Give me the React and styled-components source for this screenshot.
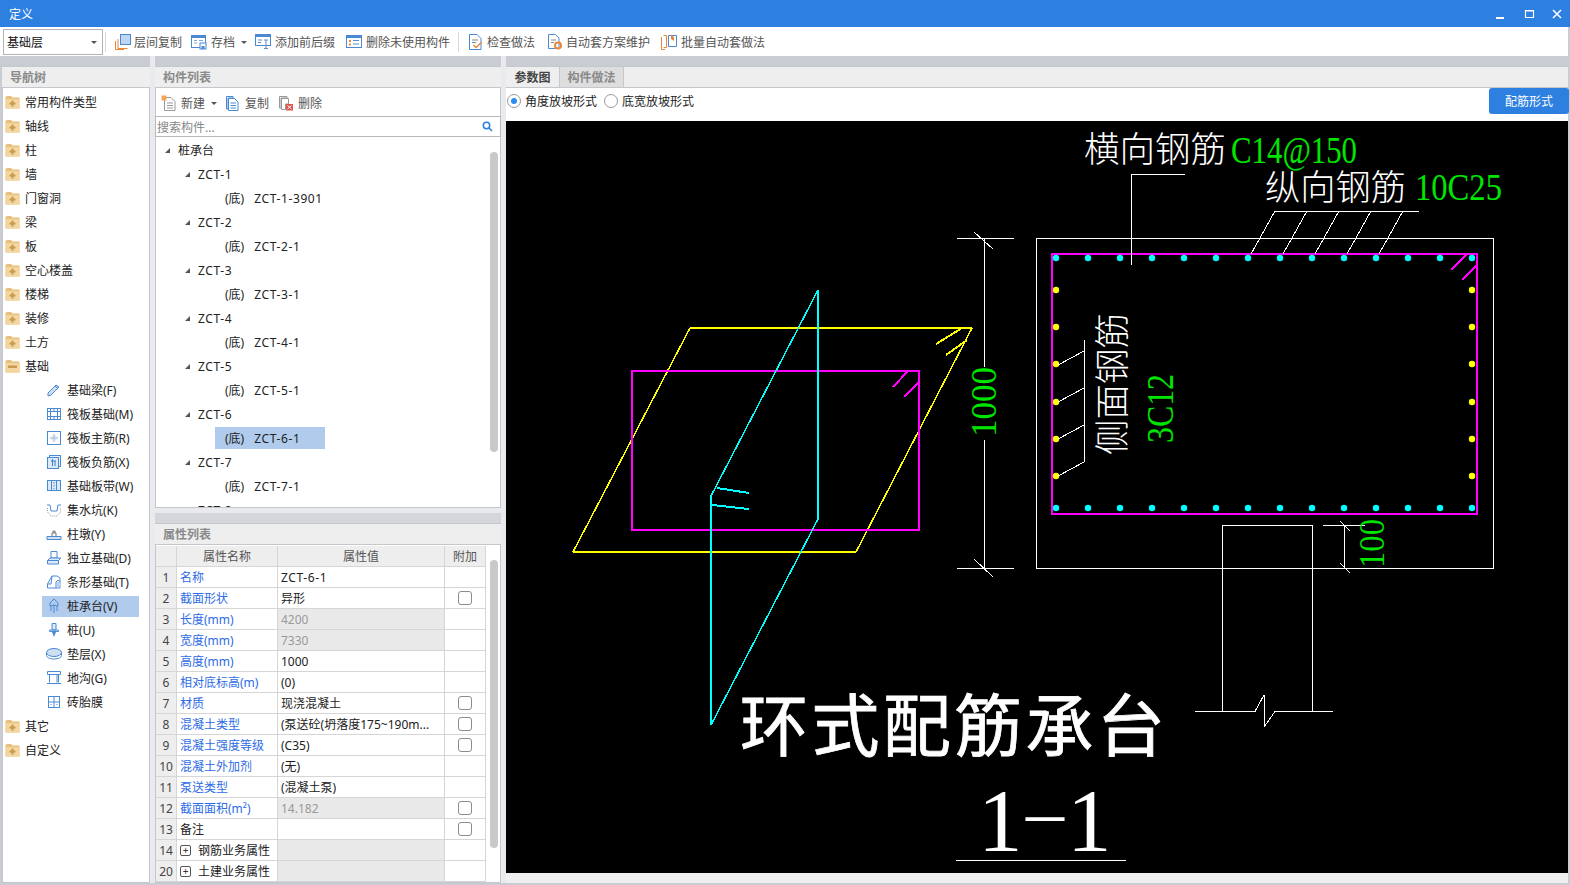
import React from "react";
import styled, { createGlobalStyle } from "styled-components";

const UI_FONT = `"Noto Sans", "Noto Sans CJK SC", sans-serif`;

const GlobalStyle = createGlobalStyle`
  html, body { margin: 0; padding: 0; overflow: hidden; background: #fff; }
  body { font-family: ${UI_FONT}; font-size: 12px; color: #222; }
  * { box-sizing: border-box; }
`;

const Page = styled.div`
  width: 1570px;
  height: 885px;
  display: flex;
  flex-direction: column;
  background: #c9ccd3;
  overflow: hidden;
`;

// 标题栏
const TitleBar = styled.div`
  height: 27px;
  flex: none;
  background: #2d7fe0;
  color: #fff;
  display: flex;
  align-items: center;
  justify-content: space-between;
  padding: 0 6px 0 9px;
`;

const WindowButtons = styled.div`
  display: flex;
  align-items: center;
  gap: 14px;
`;

// 工具栏
const Toolbar = styled.div`
  height: 29px;
  flex: none;
  background: #fff;
  margin-right: 2px;
  display: flex;
  align-items: center;
  padding: 1px 0 0 3px;
`;

const FloorSelect = styled.div`
  width: 100px;
  height: 26px;
  border: 1px solid #b4b4b4;
  color: #111;
  display: flex;
  align-items: center;
  justify-content: space-between;
  padding: 0 5px 0 3px;
`;

const Caret = styled.span`
  width: 0;
  height: 0;
  border-left: 3px solid transparent;
  border-right: 3px solid transparent;
  border-top: 3px solid #555;
  margin-left: ${(p) => p.$left || 0}px;
`;

const Sep = styled.span`
  width: 1px;
  height: 20px;
  background: #d8d8d8;
  margin: 0 ${(p) => p.$after ?? 8}px 0 ${(p) => p.$before ?? 2}px;
`;

const ToolButton = styled.div`
  display: flex;
  align-items: center;
  gap: ${(p) => p.$gap ?? 4}px;
  color: #555;
  white-space: nowrap;
  margin-right: ${(p) => p.$right ?? 11}px;
`;

const Workspace = styled.div`
  flex: 1;
  display: flex;
  padding: 0 0 2px 2px;
  min-height: 0;
`;

const Column = styled.div`
  width: ${(p) => p.$w}px;
  flex: none;
  padding-top: 10px;
  display: flex;
  flex-direction: column;
  min-height: 0;
`;

const Splitter = styled.div`
  width: 5px;
  flex: none;
  background: #e9eaed;
`;

const PanelHead = styled.div`
  height: 22px;
  flex: none;
  background: #eeeeee;
  border-top: 1px solid #c4c7cc;
  border-bottom: 1px solid #c4c7cc;
  color: #8a8a8a;
  font-weight: 700;
  display: flex;
  align-items: center;
  padding-left: 8px;
`;

const NavBody = styled.div`
  flex: 1;
  background: #fff;
  border: 1px solid #c4c7cc;
  border-top: none;
  padding-top: 2px;
  overflow: hidden;
`;

const NavRow = styled.div`
  height: 24px;
  display: flex;
  align-items: center;
  color: #222;
  padding-left: ${(p) => (p.$child ? 43 : 2)}px;
  gap: 5px;
`;

const NavLabelBox = styled.div`
  display: flex;
  align-items: center;
  gap: 5px;
  height: 21px;
  width: 97px;
  margin-left: -4px;
  padding-left: 4px;
  background: ${(p) => (p.$on ? "#b0cbec" : "transparent")};
  flex: none;
`;

const ListToolbar = styled.div`
  height: 28px;
  flex: none;
  background: #fff;
  display: flex;
  align-items: center;
  padding: 2px 0 0 5px;
  border-left: 1px solid #c4c7cc;
  border-right: 1px solid #c4c7cc;
`;

const SearchBox = styled.div`
  height: 21px;
  flex: none;
  background: #fff;
  border: 1px solid #b8b8b8;
  color: #888;
  display: flex;
  align-items: center;
  justify-content: space-between;
  padding: 0 7px 0 1px;
`;

const ListBody = styled.div`
  height: 371px;
  flex: none;
  position: relative;
  background: #fff;
  border: 1px solid #c4c7cc;
  border-top: none;
  overflow: hidden;
  padding-top: 1px;
`;

const ListRow = styled.div`
  height: 24px;
  display: flex;
  align-items: center;
  padding-left: ${(p) => p.$indent}px;
  gap: 8px;
  color: #222;
`;

const LeafLabel = styled.div`
  height: 22px;
  width: 110px;
  margin-left: 59px;
  padding-left: 10px;
  display: flex;
  align-items: center;
  gap: 10px;
  background: ${(p) => (p.$on ? "#b0cbec" : "transparent")};
`;

const CodeText = styled.span`
  letter-spacing: 0.6px;
`;

const Triangle = styled.span`
  width: 0;
  height: 0;
  border-left: 5px solid transparent;
  border-bottom: 5px solid #555;
`;

const ScrollThumb = styled.div`
  position: absolute;
  top: ${(p) => p.$top}px;
  right: ${(p) => p.$right}px;
  width: 8px;
  height: ${(p) => p.$h}px;
  border-radius: 4px;
  background: #c9c9c9;
`;

const PropGap = styled.div`
  height: 15px;
  flex: none;
  background: #d4d6db;
  border-top: 5px solid #e9eaed;
`;

const PropBody = styled.div`
  flex: 1;
  position: relative;
  background: #fff;
  border: 1px solid #c4c7cc;
  border-top: none;
  padding-top: 1px;
  overflow: hidden;
`;

const PropTable = styled.div`
  width: 330px;
  display: grid;
  grid-template-columns: 21px 101px 167px 41px;
  grid-auto-rows: 21px;
`;

const Cell = styled.div`
  display: flex;
  align-items: center;
  border-right: 1px solid #d6d6d6;
  border-bottom: 1px solid #d6d6d6;
  white-space: nowrap;
  overflow: hidden;
  padding-left: ${(p) => p.$pad ?? 3}px;
  justify-content: ${(p) => p.$align || "flex-start"};
  background: ${(p) => p.$bg || "#fff"};
  color: ${(p) => p.$color || "#222"};
  gap: 5px;
`;

const CheckBox = styled.span`
  width: 14px;
  height: 14px;
  border: 1px solid #8c8c8c;
  border-radius: 3px;
  background: #fff;
`;

const PlusBox = styled.span`
  width: 11px;
  height: 11px;
  border: 1px solid #555;
  border-radius: 2px;
  margin-right: 2px;
  flex: none;
  display: flex;
  align-items: center;
  justify-content: center;
  font-size: 10px;
  line-height: 1;
  color: #333;
`;

const TabBar = styled.div`
  height: 22px;
  flex: none;
  display: flex;
  background: #eeeeee;
  border-top: 1px solid #c4c7cc;
  border-bottom: 1px solid #c4c7cc;
`;

const Tab = styled.div`
  width: ${(p) => p.$w}px;
  display: flex;
  align-items: center;
  justify-content: center;
  font-weight: 700;
  background: ${(p) => (p.$on ? "#eeeeee" : "#dedede")};
  color: ${(p) => (p.$on ? "#444" : "#8a8a8a")};
  border-right: 1px solid #c8c8c8;
`;

const ParamBar = styled.div`
  height: 33px;
  flex: none;
  background: #fff;
  display: flex;
  align-items: flex-start;
  padding-top: 4px;
  gap: 7px;
`;

const RadioLabel = styled.label`
  display: flex;
  align-items: center;
  gap: 4px;
  color: #222;
  height: 17px;
  padding-left: ${(p) => p.$pad || 0}px;
`;

const RadioDot = styled.span`
  width: 14px;
  height: 14px;
  border-radius: 50%;
  border: 1px solid #999;
  background: #fff;
  display: flex;
  align-items: center;
  justify-content: center;
  &::after {
    content: "";
    width: 6px;
    height: 6px;
    border-radius: 50%;
    background: ${(p) => (p.$on ? "#2d8cf0" : "transparent")};
  }
`;

const BlueButton = styled.div`
  margin: -4px -1px 0 auto;
  width: 80px;
  height: 26px;
  border-radius: 3px;
  background: #2d7fe0;
  color: #fff;
  display: flex;
  align-items: center;
  justify-content: center;
`;

const Canvas = styled.div`
  height: 752px;
  flex: none;
  background: #000;
`;

const CanvasFoot = styled.div`
  flex: 1;
  background: #efefef;
`;

/* ---------- 图标 ---------- */
const Svg = ({ w = 16, h = 16, children }) => (
  <svg width={w} height={h} viewBox={`0 0 ${w} ${h}`} fill="none" style={{ flex: "none", display: "block" }}>
    {children}
  </svg>
);

const BLUE = "#4a8ad4";
const ORANGE = "#e8873a";

const FolderIcon = ({ open }) => (
  <Svg w={15} h={14}>
    <path d="M0.5 3 C0.5 1.5 1 1 2.5 1 H6 L7.5 2.5 H14.5 V13.5 H0.5Z" fill="#e8bf7c" />
    <path d="M0.5 4 H14.5 V13.5 H0.5Z" fill="#f3d69f" />
    {open ? (
      <path d="M3 6.5 H12 V9 H3Z" fill="#c79a50" />
    ) : (
      <path d="M6.5 5.5 H8.5 V7.5 H10.5 V9.5 H8.5 V11.5 H6.5 V9.5 H4.5 V7.5 H6.5Z" fill="#c79a50" />
    )}
  </Svg>
);

const ic = { stroke: BLUE, strokeWidth: 1 };

const childIcons = {
  beam: <><path d="M2 11 L10 3 L13 5 L5 13 L2 14Z" {...ic} fill="#cfe0f5" /><path d="M9 4 L12 6.5" {...ic} /></>,
  raft: <><rect x="1.5" y="2.5" width="13" height="11" {...ic} /><rect x="4.5" y="5.5" width="7" height="5" {...ic} /><path d="M1.5 5.5H4.5M1.5 10.5H4.5M11.5 5.5H14.5M11.5 10.5H14.5M4.5 2.5V5.5M8 2.5V5.5M11.5 2.5V5.5M4.5 10.5V13.5M8 10.5V13.5M11.5 10.5V13.5" {...ic} /></>,
  rebar: <><rect x="1.5" y="1.5" width="13" height="13" {...ic} /><path d="M8 4V12M4 8H12" stroke="#8ab0dd" /><path d="M6 6H10V10H6Z" stroke="#cfdcec" /></>,
  neg: <><rect x="3.5" y="1.5" width="11" height="11" {...ic} fill="#e8f0fa" /><rect x="1.5" y="3.5" width="11" height="11" {...ic} fill="#dce9f8" /><path d="M5 7H10M6.5 5V12M9 7V12" stroke="#3d7cc8" /></>,
  strip: <><rect x="1.5" y="2.5" width="13" height="10" fill="#dce9f8" {...ic} /><path d="M1 2.5H15M1 12.5H15M5.5 3V12M10.5 3V12" {...ic} /><path d="M8 4V11" stroke={BLUE} strokeDasharray="1.5 1.5" /></>,
  pit: <><path d="M1 3H4L5 9H11L12 3H15" {...ic} /><path d="M1.5 6V10L5 14H11L14.5 10V6" stroke="#9a9a9a" strokeDasharray="1 1" /></>,
  pier: <><path d="M1 13.5V10.5H15V13.5Z" {...ic} fill="#cfe0f5" /><path d="M6 10.5V7H10V10.5M7 7V5H9V7" stroke="#777" /></>,
  indep: <><path d="M5 1.5H11V8H5Z" {...ic} /><path d="M1.5 10.5L4 8H15L12.5 10.5V14H1.5Z" {...ic} fill="#dce9f8" /><path d="M12.5 10.5H1.5" {...ic} /></>,
  stripF: <><path d="M1.5 14V10L6 2H11L14 4V14Z" {...ic} /><path d="M6 2L5 10H1.5M10 14V8L12 6L14.5 9" {...ic} /><path d="M11 8H14.5V12L11 14Z" fill="#bcd4f0" /></>,
  cap: <><path d="M8 1L12 5V8L8 7L4 8V5Z" {...ic} /><path d="M8 7V15M5 8V13M11 8V13" {...ic} /></>,
  pile: <><path d="M6 1.5H10V8H6Z" {...ic} fill="#dce9f8" /><path d="M3.5 8H12.5V9.5H3.5Z" {...ic} /><path d="M6 10H10L8 15Z" fill={BLUE} /></>,
  cushion: <><ellipse cx="8" cy="6.5" rx="7.5" ry="4" {...ic} fill="#cfdff2" /><path d="M0.5 6.5V9.5C0.5 11.5 4 13 8 13C12 13 15.5 11.5 15.5 9.5V6.5" {...ic} /></>,
  ditch: <><path d="M1.5 1.5H14.5V4.5H1.5Z" {...ic} /><path d="M3.5 4.5V12.5M12.5 4.5V12.5M11 4.5V12.5M1 13.5H15" {...ic} /></>,
  brick: <><rect x="2.5" y="2.5" width="11" height="11" {...ic} /><path d="M8 2.5V13.5M2.5 8H13.5" {...ic} /><path d="M5 10V11M11 10V11" stroke={BLUE} /></>,
};

const toolIcons = {
  copyFloor: <><rect x="5.5" y="0.5" width="10" height="10" fill="#bcd6f5" stroke={BLUE} /><path d="M3 5V14.5H12.5M0.5 7V15.5H9" stroke={ORANGE} /></>,
  archive: <><rect x="0.5" y="1.5" width="14" height="12" fill="#fff" stroke={BLUE} /><path d="M0.5 1.5H14.5V4H0.5Z" fill={BLUE} /><path d="M3 6.5H6M3 9H6M8 6.5H12" stroke="#7aa8dd" /><rect x="9" y="9" width="6" height="6" fill="#fff" stroke={BLUE} /><rect x="10.5" y="12" width="3" height="3" fill={BLUE} /></>,
  prefix: <><rect x="0.5" y="0.5" width="15" height="11" stroke={BLUE} /><path d="M0.5 0.5H15.5V3H0.5Z" fill={BLUE} /><path d="M3 6H7M3 8.5H6M9 6H13M11 6V14M9 14.5H13" stroke="#5a8fd0" /></>,
  clean: <><rect x="0.5" y="1.5" width="15" height="12" fill="#fff" stroke={BLUE} /><path d="M0.5 1.5H15.5V4H0.5Z" fill={BLUE} /><path d="M3 6H5V8H3ZM3 9.5H5V11.5H3Z" fill={ORANGE} /><path d="M7 6.5H13M7 10H13" stroke="#5a8fd0" /></>,
  check: <><path d="M1.5 0.5H9L13 4.5V15.5H1.5Z" stroke={BLUE} /><path d="M4 6H10M4 8.5H8" stroke="#888" /><path d="M5.5 11L8 13.5L14 8" stroke={ORANGE} strokeWidth="1.4" /></>,
  auto: <><path d="M1.5 0.5H8.5L12 4V14.5H1.5Z" stroke={BLUE} /><path d="M4 6H9M4 8.5H7" stroke="#888" /><circle cx="11" cy="11.5" r="3" stroke={ORANGE} strokeWidth="2" /></>,
  batch: <><path d="M2.5 1.5H5.5V13.5H2.5M0.5 3V15.5H4" stroke={ORANGE} /><path d="M7.5 1.5H15.5V12.5H7.5Z" stroke={BLUE} /><path d="M10 1V5L13 7V3Z" fill={ORANGE} /></>,
  fresh: <><path d="M3.5 2.5H10L14 6.5V15.5H3.5Z" fill="#fff" stroke="#999" /><path d="M6 8H12M6 10.5H12M6 13H12" stroke="#999" /><path d="M0.5 0.5H5.5V5.5H0.5Z" fill="#f2a65a" /></>,
  dup: <><path d="M1.5 1.5H8V3H3V14H1.5Z" stroke={BLUE} /><path d="M3.5 3.5H9.5L13 7V15.5H3.5Z" fill="#fff" stroke={BLUE} /><path d="M5.5 8H11M5.5 10.5H11M5.5 13H11" stroke={BLUE} /></>,
  del: <><path d="M1.5 1.5H9V3H3V13H1.5Z" stroke="#999" /><path d="M3.5 3.5H10.5V9H7.5V14.5H3.5Z" stroke="#999" /><rect x="8" y="9" width="7" height="6.5" fill="#e0534a" /><path d="M9.5 10.5L13.5 14M13.5 10.5L9.5 14" stroke="#fff" /></>,
};

const Glass = () => (
  <Svg w={11} h={11}>
    <circle cx="4.5" cy="4.5" r="3.2" stroke="#2d7fe0" strokeWidth="1.5" />
    <path d="M7 7L10 10" stroke="#2d7fe0" strokeWidth="1.6" />
  </Svg>
);

/* ---------- 数据 ---------- */
const topNav = ["常用构件类型", "轴线", "柱", "墙", "门窗洞", "梁", "板", "空心楼盖", "楼梯", "装修", "土方"];
const childNav = [
  ["beam", "基础梁(F)"], ["raft", "筏板基础(M)"], ["rebar", "筏板主筋(R)"], ["neg", "筏板负筋(X)"],
  ["strip", "基础板带(W)"], ["pit", "集水坑(K)"], ["pier", "柱墩(Y)"], ["indep", "独立基础(D)"],
  ["stripF", "条形基础(T)"], ["cap", "桩承台(V)"], ["pile", "桩(U)"], ["cushion", "垫层(X)"],
  ["ditch", "地沟(G)"], ["brick", "砖胎膜"],
];

const props = [
  ["1", "名称", <CodeText>ZCT-6-1</CodeText>, 0, 0],
  ["2", "截面形状", "异形", 0, 1],
  ["3", "长度(mm)", "4200", 1, 0],
  ["4", "宽度(mm)", "7330", 1, 0],
  ["5", "高度(mm)", "1000", 0, 0],
  ["6", "相对底标高(m)", "(0)", 0, 0],
  ["7", "材质", "现浇混凝土", 0, 1],
  ["8", "混凝土类型", "(泵送砼(坍落度175~190m...", 0, 1],
  ["9", "混凝土强度等级", "(C35)", 0, 1],
  ["10", "混凝土外加剂", "(无)", 0, 0],
  ["11", "泵送类型", "(混凝土泵)", 0, 0],
  ["12", "截面面积(m²)", "14.182", 1, 1],
];

/* ---------- 图纸 ---------- */
const CYAN = "#00ffff";
const MAGENTA = "#ff00ff";
const YELLOW = "#ffff00";
const GREEN = "#00e600";
const CAD_SERIF = `"Liberation Serif", serif`;
const CAD_CJK = `"Noto Sans CJK SC", sans-serif`;

const topDotsX = [1056, 1088, 1120, 1152, 1184, 1216, 1248, 1280, 1312, 1344, 1376, 1408, 1440, 1472];
const sideDotsY = [290, 327, 364, 402, 439, 476];

const Line = ({ d, c = "#fff", w = 1 }) => <path d={d} stroke={c} strokeWidth={w} fill="none" shapeRendering="crispEdges" />;

const Drawing = () => (
  <svg width="1062" height="752" viewBox="506 121 1062 752" style={{ display: "block" }}>
    {/* 左侧三维示意 */}
    <Line c={YELLOW} w={2} d="M690 328H972M856 552H573" />
    <Line c={YELLOW} w={1.5} d="M690 328L573 552M972 328L856 552" />
    <Line c={YELLOW} w={2} d="M962 328L936 344M967 340L946 355" />
    <Line c={MAGENTA} w={2} d="M632 371H919V530H632Z" />
    <Line c={MAGENTA} w={2} d="M908 371L893 387M919 382L904 397" />
    <Line c={CYAN} w={2} d="M711 725V496M818 290V519" />
    <Line c={CYAN} w={1.5} d="M711 496L818 290M818 519L711 725" />
    <Line c={CYAN} w={2} d="M717 488L749 493M712 505L749 509" />

    {/* 1000 标注 */}
    <Line d="M957 238.5H1014M957 568.5H1014M984 238V367M984 440V568M974 232L993 249M974 559L993 577" />
    <text transform="translate(996 437) rotate(-90) " fill={GREEN} fontFamily={CAD_SERIF} fontSize="36" textLength="70" lengthAdjust="spacingAndGlyphs">1000</text>

    {/* 截面 */}
    <Line d="M1036.5 238.5H1493.5V568.5H1036.5Z" />
    <Line c={MAGENTA} w={2} d="M1052 254H1477V514H1052Z" />
    <Line c={MAGENTA} w={2} d="M1466 255L1451 270M1476 266L1462 280" />
    {topDotsX.map((x) => (
      <React.Fragment key={x}>
        <circle cx={x} cy={258} r={3.2} fill={CYAN} />
        <circle cx={x} cy={508} r={3.2} fill={CYAN} />
      </React.Fragment>
    ))}
    {sideDotsY.map((y) => (
      <React.Fragment key={y}>
        <circle cx={1056} cy={y} r={3.2} fill={YELLOW} />
        <circle cx={1472} cy={y} r={3.2} fill={YELLOW} />
      </React.Fragment>
    ))}

    {/* 引线 */}
    <Line d="M1131 174.5H1185M1131.5 174V265" />
    <Line d="M1275 211.5H1419M1275 211L1251 254M1307 211L1283 254M1339 211L1315 254M1371 211L1347 254M1403 211L1379 254" />
    <Line d="M1084.5 340V462M1084 351L1058 365M1084 388L1058 402M1084 425L1058 439M1084 462L1058 476" />

    <text x="1084" y="162" fill="#fff" fontFamily={CAD_CJK} fontWeight="300" fontSize="35" textLength="142" lengthAdjust="spacingAndGlyphs">横向钢筋</text>
    <text x="1231" y="163" fill={GREEN} fontFamily={CAD_SERIF} fontSize="37" textLength="126" lengthAdjust="spacingAndGlyphs">C14@150</text>
    <text x="1265" y="200" fill="#fff" fontFamily={CAD_CJK} fontWeight="300" fontSize="35" textLength="141" lengthAdjust="spacingAndGlyphs">纵向钢筋</text>
    <text x="1415" y="200" fill={GREEN} fontFamily={CAD_SERIF} fontSize="37" textLength="87" lengthAdjust="spacingAndGlyphs">10C25</text>
    <text transform="translate(1125 455) rotate(-90)" fill="#fff" fontFamily={CAD_CJK} fontWeight="300" fontSize="35" textLength="142" lengthAdjust="spacingAndGlyphs">侧面钢筋</text>
    <text transform="translate(1173 443) rotate(-90)" fill={GREEN} fontFamily={CAD_SERIF} fontSize="37" textLength="69" lengthAdjust="spacingAndGlyphs">3C12</text>

    {/* 柱 */}
    <Line d="M1222.5 711V525.5H1312.5V711" />
    <Line d="M1195 711.5H1255L1264 695V727L1275 711.5H1333" />
    <Line d="M1323 525.5H1365M1344.5 525V568M1340 521L1350 531M1340 563L1350 573" />
    <text transform="translate(1384 568) rotate(-90)" fill={GREEN} fontFamily={CAD_SERIF} fontSize="36" textLength="49" lengthAdjust="spacingAndGlyphs">100</text>

    {/* 标题 */}
    <text x="740" y="751" fill="#fff" stroke="#fff" strokeWidth="0.8" fontFamily={CAD_CJK} fontSize="68" textLength="425" lengthAdjust="spacing">环式配筋承台</text>
    <text x="978" y="850" fill="#fff" fontFamily={CAD_SERIF} fontSize="89">1</text>
    <text x="1026" y="837" fill="#fff" fontFamily={CAD_SERIF} fontSize="76">–</text>
    <text x="1067" y="850" fill="#fff" fontFamily={CAD_SERIF} fontSize="89">1</text>
    <Line d="M956 860.5H1126" />
  </svg>
);

export default function App() {
  return (
    <Page>
      <GlobalStyle />
      <TitleBar>
        <span>定义</span>
        <WindowButtons>
          <svg width="14" height="12" viewBox="0 0 14 12"><path d="M2 10H10" stroke="#fff" strokeWidth="2" /></svg>
          <svg width="14" height="12" viewBox="0 0 14 12"><path d="M3.5 2.5H11.5V9.5H3.5Z M3.5 3H11.5" stroke="#fff" fill="none" strokeWidth="1.2" /></svg>
          <svg width="14" height="12" viewBox="0 0 14 12"><path d="M3 2L11 10M11 2L3 10" stroke="#fff" strokeWidth="1.5" /></svg>
        </WindowButtons>
      </TitleBar>

      <Toolbar>
        <FloorSelect>基础层<Caret /></FloorSelect>
        <Sep $after={9} />
        <ToolButton $gap={3} $right={9}><Svg>{toolIcons.copyFloor}</Svg>层间复制</ToolButton>
        <ToolButton $right={8}><Svg>{toolIcons.archive}</Svg>存档<Caret $left={2} /></ToolButton>
        <ToolButton><Svg>{toolIcons.prefix}</Svg>添加前后缀</ToolButton>
        <ToolButton $right={8}><Svg>{toolIcons.clean}</Svg>删除未使用构件</ToolButton>
        <Sep $before={0} $after={9} />
        <ToolButton $gap={5} $right={12}><Svg w={14}>{toolIcons.check}</Svg>检查做法</ToolButton>
        <ToolButton><Svg w={15}>{toolIcons.auto}</Svg>自动套方案维护</ToolButton>
        <ToolButton><Svg>{toolIcons.batch}</Svg>批量自动套做法</ToolButton>
      </Toolbar>

      <Workspace>
        <Column $w={148}>
          <PanelHead>导航树</PanelHead>
          <NavBody>
            {topNav.map((t) => (
              <NavRow key={t}><FolderIcon />{t}</NavRow>
            ))}
            <NavRow><FolderIcon open />基础</NavRow>
            {childNav.map(([k, t]) => (
              <NavRow $child key={t}>
                <NavLabelBox $on={k === "cap"}>
                  <Svg>{childIcons[k]}</Svg>
                  {t}
                </NavLabelBox>
              </NavRow>
            ))}
            <NavRow><FolderIcon />其它</NavRow>
            <NavRow><FolderIcon />自定义</NavRow>
          </NavBody>
        </Column>
        <Splitter />

        <Column $w={346}>
          <PanelHead>构件列表</PanelHead>
          <ListToolbar>
            <ToolButton $right={8}><Svg>{toolIcons.fresh}</Svg>新建<Caret $left={2} /></ToolButton>
            <ToolButton $right={9}><Svg>{toolIcons.dup}</Svg>复制</ToolButton>
            <ToolButton><Svg>{toolIcons.del}</Svg>删除</ToolButton>
          </ListToolbar>
          <SearchBox>搜索构件...<Glass /></SearchBox>
          <ListBody>
            <ListRow $indent={9}><Triangle />桩承台</ListRow>
            {[1, 2, 3, 4, 5, 6, 7, 8].map((n) => (
              <React.Fragment key={n}>
                <ListRow $indent={29}><Triangle /><CodeText>ZCT-{n}</CodeText></ListRow>
                <ListRow $indent={0}>
                  <LeafLabel $on={n === 6}><span>(底)</span><CodeText>ZCT-{n}-{n === 1 ? "3901" : "1"}</CodeText></LeafLabel>
                </ListRow>
              </React.Fragment>
            ))}
            <ScrollThumb $top={15} $right={2} $h={300} />
          </ListBody>
          <PropGap />
          <PanelHead>属性列表</PanelHead>
          <PropBody>
            <PropTable>
              <Cell $bg="#eeeeee" />
              <Cell $bg="#eeeeee" $align="center" $pad={0} $color="#555">属性名称</Cell>
              <Cell $bg="#eeeeee" $align="center" $pad={0} $color="#555">属性值</Cell>
              <Cell $bg="#eeeeee" $align="center" $pad={0} $color="#555">附加</Cell>
              {props.map(([n, name, val, locked, check]) => (
                <React.Fragment key={n}>
                  <Cell $bg="#eeeeee" $align="center" $pad={0} $color="#444">{n}</Cell>
                  <Cell $color="#2e6be6">{name}</Cell>
                  <Cell $bg={locked ? "#e9e9e9" : "#fff"} $color={locked ? "#999" : "#222"}>{val}</Cell>
                  <Cell $align="center" $pad={0}>{check ? <CheckBox /> : null}</Cell>
                </React.Fragment>
              ))}
              <Cell $bg="#eeeeee" $align="center" $pad={0} $color="#444">13</Cell>
              <Cell>备注</Cell>
              <Cell />
              <Cell $align="center" $pad={0}><CheckBox /></Cell>
              <Cell $bg="#eeeeee" $align="center" $pad={0} $color="#444">14</Cell>
              <Cell><PlusBox>+</PlusBox>钢筋业务属性</Cell>
              <Cell $bg="#e9e9e9" />
              <Cell />
              <Cell $bg="#eeeeee" $align="center" $pad={0} $color="#444">20</Cell>
              <Cell><PlusBox>+</PlusBox>土建业务属性</Cell>
              <Cell $bg="#e9e9e9" />
              <Cell />
            </PropTable>
            <ScrollThumb $top={15} $right={2} $h={288} />
          </PropBody>
        </Column>
        <Splitter />

        <Column $w={1062}>
          <TabBar>
            <Tab $w={54} $on>参数图</Tab>
            <Tab $w={64}>构件做法</Tab>
          </TabBar>
          <ParamBar>
            <RadioLabel $pad={1}><RadioDot $on />角度放坡形式</RadioLabel>
            <RadioLabel><RadioDot />底宽放坡形式</RadioLabel>
            <BlueButton>配筋形式</BlueButton>
          </ParamBar>
          <Canvas><Drawing /></Canvas>
          <CanvasFoot />
        </Column>
      </Workspace>
    </Page>
  );
}
